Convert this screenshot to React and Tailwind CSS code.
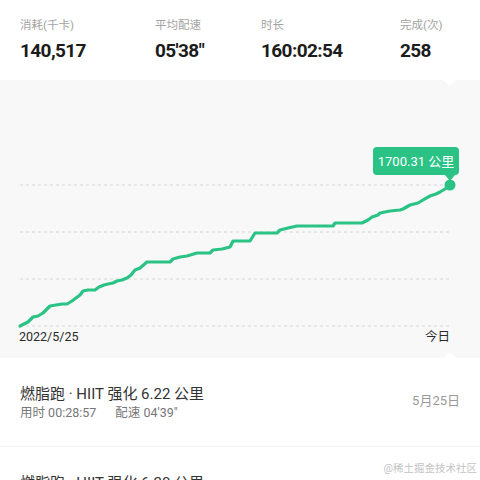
import React from "react";

const pts = [
  [20,326],[24,324],[28,322],[31,319],[33,317],[38,316],[43,313],[47,309],[50,306],[56,305],[62,304],[67,304],[72,301],[76,298],[80,295],[83,291],[88,290],[95,290],[99,287],[104,285],[108,284],[113,283],[117,281],[122,280],[127,278],[131,275],[135,270],[140,268],[147,262],[158,262],[170,262],[173,259],[180,257],[187,256],[197,253],[205,253],[210,253],[213,250],[222,249],[230,247],[233,241],[250,241],[255,233],[277,233],[280,230],[288,228],[297,226],[333,226],[335,223],[362,223],[368,220],[372,217],[378,215],[380,213],[390,211],[400,210],[403,209],[410,205],[418,203],[423,200],[430,196],[436,194],[440,192],[445,189],[450,185]
];

const G = "#2bc385";

function Chart() {
  const d = pts.map((p, i) => (i ? "L" : "M") + p[0] + " " + (p[1] - 80)).join(" ");
  const grid = [185, 232, 279, 326];
  return (
    <div className="relative h-[278px] bg-[#f8f8f8] flex flex-col">
      <svg className="absolute inset-0" width="480" height="278" viewBox="0 0 480 278">
        {grid.map((y) => (
          <line key={y} x1="20" x2="450" y1={y - 80} y2={y - 80} stroke="#d6d6d6" strokeWidth="1" strokeDasharray="3 3" />
        ))}
        <path d={d} fill="none" stroke={G} strokeWidth="3.2" strokeLinejoin="round" strokeLinecap="round" />
        <circle cx="450" cy={185 - 80} r="5.5" fill={G} />
        <polygon points={`445,${175 - 80} 455,${175 - 80} 450,${181 - 80}`} fill={G} />
        <polygon points="443,0 456,0 449.5,6" fill="#ffffff" />
        <polygon points="443,278 456,278 449.5,272" fill="#ffffff" />
      </svg>
      <div className="absolute left-[373px] top-[67px] w-[86px] h-[28px] rounded-[4px] bg-[#2bc385] flex items-center justify-center text-white text-[13px] leading-none">
        1700.31 公里
      </div>
      <div className="mt-auto mb-[13px] flex justify-between pl-[19px] pr-[30px] text-[12.5px] leading-[16px] text-[#2a2a2a] relative">
        <span>2022/5/25</span>
        <span>今日</span>
      </div>
    </div>
  );
}

function Row({ title, time, pace, date }) {
  return (
    <div className="flex items-center justify-between pl-[20px] pr-[20px] pt-[26px] pb-[24px] border-b border-[#f1f1f1]">
      <div className="flex flex-col">
        <div className="text-[15px] leading-[20px] text-[#333]">{title}</div>
        <div className="text-[12.5px] leading-[18px] text-[#777] flex">
          <span>用时 {time}</span>
          <span className="ml-[19px]">配速 {pace}</span>
        </div>
      </div>
      <div className="text-[13px] leading-[18px] text-[#9a9a9a] mt-[-4px]">{date}</div>
    </div>
  );
}

export default function App() {
  const stats = [
    ["消耗(千卡)", "140,517"],
    ["平均配速", "05'38\""],
    ["时长", "160:02:54"],
    ["完成(次)", "258"],
  ];
  return (
    <div
      className="relative w-[480px] h-[480px] overflow-hidden bg-white"
      style={{ fontFamily: "Roboto, 'Noto Sans CJK SC', sans-serif" }}
    >
      <div className="h-[80px] grid grid-cols-[135px_106px_139px_1fr] pl-[20px] pt-[17px]">
        {stats.map(([l, v]) => (
          <div key={l} className="flex flex-col">
            <div className="text-[11.5px] leading-[16px] text-[#a3a3a3]">{l}</div>
            <div className="mt-[6px] text-[19px] leading-[24px] font-bold text-[#1c1c1c] tracking-[-0.6px]">{v}</div>
          </div>
        ))}
      </div>
      <Chart />
      <Row title="燃脂跑 · HIIT 强化 6.22 公里" time="00:28:57" pace={"04'39\""} date="5月25日" />
      <Row title="燃脂跑 · HIIT 强化 6.20 公里" time="00:29:10" pace={"04'42\""} date="5月24日" />
      <div className="absolute right-[3px] top-[461px] text-[10.5px] leading-[16px] text-[#c4c4c4]">@稀土掘金技术社区</div>
    </div>
  );
}
